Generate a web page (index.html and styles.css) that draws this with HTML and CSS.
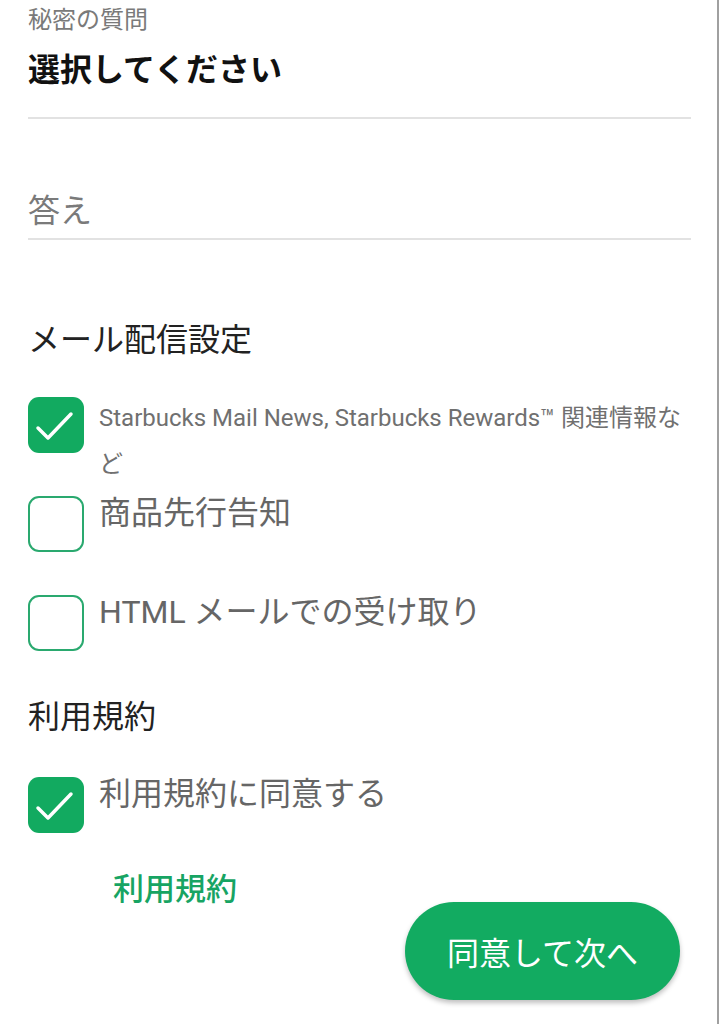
FILE: index.html
```html
<!DOCTYPE html>
<html lang="ja">
<head>
  <meta charset="UTF-8">
  <meta name="viewport" content="width=device-width, initial-scale=1.0">
  <title>会員登録 - 秘密の質問</title>
  <link rel="stylesheet" href="styles.css">
</head>
<body>
  <main class="page">
    <!-- 秘密の質問 -->
    <div class="field field-select">
      <div class="field-label">秘密の質問</div>
      <div class="field-value">選択してください</div>
    </div>

    <div class="field field-answer">
      <div class="field-placeholder">答え</div>
    </div>

    <!-- メール配信設定 -->
    <h2 class="section-title mail-title">メール配信設定</h2>

    <label class="check-row check-row-small">
      <span class="box checked">
        <svg viewBox="0 0 56 56" width="56" height="56"><path d="M10 31 L20 41 L43 17" /></svg>
      </span>
      <span class="check-text small">Starbucks Mail News, Starbucks Rewards™ 関連情報など</span>
    </label>

    <label class="check-row row-2">
      <span class="box"></span>
      <span class="check-text">商品先行告知</span>
    </label>

    <label class="check-row row-3">
      <span class="box"></span>
      <span class="check-text">HTML メールでの受け取り</span>
    </label>

    <!-- 利用規約 -->
    <h2 class="section-title terms-title">利用規約</h2>

    <label class="check-row row-4">
      <span class="box checked">
        <svg viewBox="0 0 56 56" width="56" height="56"><path d="M10 31 L20 41 L43 17" /></svg>
      </span>
      <span class="check-text">利用規約に同意する</span>
    </label>

    <div class="actions">
      <a href="#" class="terms-link">利用規約</a>
      <button class="next-btn">同意して次へ</button>
    </div>
  </main>
</body>
</html>
```

FILE: styles.css
```css
/* Global */
body {
  margin: 0;
  padding: 0;
  background-color: #ffffff;
  color: #222222;
  font-family: Roboto, "Noto Sans CJK JP", sans-serif;
}

.page {
  box-sizing: border-box;
  width: 719px;
  min-height: 1024px;
  padding: 5px 26px 0 28px;
  border-right: 2px solid #a0a0a0;
  display: flex;
  flex-direction: column;
}

/* Fields */
.field {
  border-bottom: 2px solid #e2e2e2;
}

.field-label {
  font-size: 24px;
  line-height: 30px;
  color: #7a7a7a;
}

.field-value {
  margin-top: 15px;
  padding-bottom: 27px;
  font-size: 32px;
  line-height: 40px;
  font-weight: bold;
  color: #111111;
}

.field-answer {
  margin-top: 72px;
}

.field-placeholder {
  padding-bottom: 7px;
  font-size: 32px;
  line-height: 40px;
  color: #7a7a7a;
}

/* Section titles */
.section-title {
  margin: 0;
  font-size: 32px;
  line-height: 40px;
  font-weight: normal;
  color: #222222;
}

.mail-title {
  margin-top: 80px;
}

.terms-title {
  margin-top: 46px;
}

/* Checkbox rows */
.check-row {
  display: flex;
  align-items: flex-start;
  gap: 15px;
}

.check-row-small {
  margin-top: 35px;
}

.row-2 {
  margin-top: 6px;
}

.row-3 {
  margin-top: 40px;
}

.row-4 {
  margin-top: 37px;
}

.box {
  box-sizing: border-box;
  flex: 0 0 56px;
  width: 56px;
  height: 56px;
  margin-top: 3px;
  border: 2px solid #2aa96f;
  border-radius: 11px;
  background-color: #ffffff;
}

.check-row-small .box {
  margin-top: 2px;
}

.box.checked {
  border: none;
  background-color: #12aa60;
}

.box svg {
  display: block;
}

.box svg path {
  fill: none;
  stroke: #ffffff;
  stroke-width: 3.5;
  stroke-linecap: round;
  stroke-linejoin: round;
}

.check-text {
  font-size: 32px;
  line-height: 40px;
  color: #666666;
}

.check-text.small {
  font-size: 24px;
  line-height: 46px;
  color: #707070;
}

/* Actions */
.actions {
  display: flex;
  justify-content: space-between;
  align-items: flex-start;
  margin-top: 37px;
}

.terms-link {
  margin-left: 85px;
  font-size: 31px;
  line-height: 40px;
  font-weight: 500;
  color: #17a463;
  text-decoration: none;
}

.next-btn {
  margin-top: 32px;
  margin-right: 11px;
  width: 275px;
  height: 98px;
  border: none;
  border-radius: 49px;
  background-color: #12ab61;
  color: #ffffff;
  font-family: inherit;
  font-size: 32px;
  box-shadow: 0 3px 5px rgba(0, 0, 0, 0.25);
  cursor: pointer;
}
```
